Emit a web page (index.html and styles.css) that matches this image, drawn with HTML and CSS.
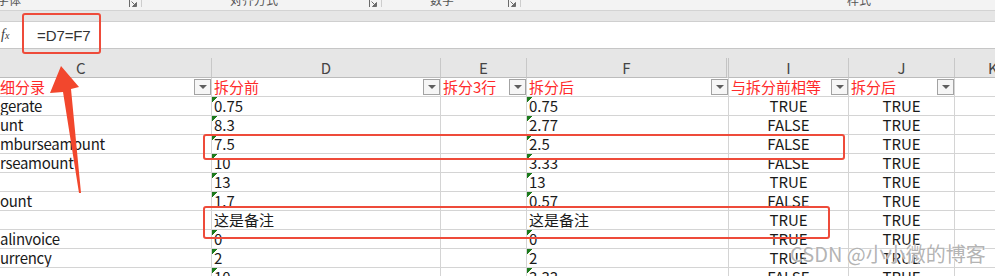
FILE: index.html
```html
<!DOCTYPE html>
<html lang="zh">
<head>
<meta charset="utf-8">
<title>Excel</title>
<link rel="stylesheet" href="styles.css">
</head>
<body>
<div class="app">
  <div class="ribbon">
    <div class="grp g1"><span class="lbl">字体</span><svg class="launch" viewBox="0 0 8 8"><path d="M0.5 8V0.5H6" fill="none" stroke="#6a6a6a"/><path d="M2.5 2.5L6.5 6.5M7.5 3.5V7.5H3.5Z" fill="#6a6a6a" stroke="#6a6a6a"/></svg></div>
    <div class="grp g2"><span class="lbl">对齐方式</span><svg class="launch" viewBox="0 0 8 8"><path d="M0.5 8V0.5H6" fill="none" stroke="#6a6a6a"/><path d="M2.5 2.5L6.5 6.5M7.5 3.5V7.5H3.5Z" fill="#6a6a6a" stroke="#6a6a6a"/></svg></div>
    <div class="grp g3"><span class="lbl">数字</span><svg class="launch" viewBox="0 0 8 8"><path d="M0.5 8V0.5H6" fill="none" stroke="#6a6a6a"/><path d="M2.5 2.5L6.5 6.5M7.5 3.5V7.5H3.5Z" fill="#6a6a6a" stroke="#6a6a6a"/></svg></div>
    <div class="grp g4"><span class="lbl">样式</span></div>
  </div>
  <div class="band"></div>
  <div class="fbar"><span class="fx">f<span class="fxx">x</span></span><span class="formula">=D7=F7</span></div>
  <div class="gap"></div>

  <div class="sheet">
    <div class="ch chC">C</div><div class="ch">D</div><div class="ch">E</div><div class="ch chF">F</div><div class="ch">I</div><div class="ch">J</div><div class="ch chK">K</div>

    <div class="c hd cc"><span>细分录</span><span class="fb"><i></i></span></div>
    <div class="c hd"><span>拆分前</span><span class="fb"><i></i></span></div>
    <div class="c hd"><span>拆分3行</span><span class="fb"><i></i></span></div>
    <div class="c hd"><span>拆分后</span><span class="fb"><i></i></span></div>
    <div class="c hd"><span>与拆分前相等</span><span class="fb"><i></i></span></div>
    <div class="c hd"><span>拆分后</span><span class="fb"><i></i></span></div>
    <div class="c"></div>

    <div class="c cc">gerate</div><div class="c t">0.75</div><div class="c"></div><div class="c t">0.75</div><div class="c ctr">TRUE</div><div class="c ctr">TRUE</div><div class="c"></div>
    <div class="c cc">unt</div><div class="c t">8.3</div><div class="c"></div><div class="c t">2.77</div><div class="c ctr">FALSE</div><div class="c ctr">TRUE</div><div class="c"></div>
    <div class="c cc">mburseamount</div><div class="c t">7.5</div><div class="c"></div><div class="c t">2.5</div><div class="c ctr">FALSE</div><div class="c ctr">TRUE</div><div class="c"></div>
    <div class="c cc">rseamount</div><div class="c t">10</div><div class="c"></div><div class="c t">3.33</div><div class="c ctr">FALSE</div><div class="c ctr">TRUE</div><div class="c"></div>
    <div class="c cc"></div><div class="c t">13</div><div class="c"></div><div class="c t">13</div><div class="c ctr">TRUE</div><div class="c ctr">TRUE</div><div class="c"></div>
    <div class="c cc">ount</div><div class="c t">1.7</div><div class="c"></div><div class="c t">0.57</div><div class="c ctr">FALSE</div><div class="c ctr">TRUE</div><div class="c"></div>
    <div class="c cc"></div><div class="c">这是备注</div><div class="c"></div><div class="c">这是备注</div><div class="c ctr">TRUE</div><div class="c ctr">TRUE</div><div class="c"></div>
    <div class="c cc">alinvoice</div><div class="c t">0</div><div class="c"></div><div class="c t">0</div><div class="c ctr">TRUE</div><div class="c ctr">TRUE</div><div class="c"></div>
    <div class="c cc">urrency</div><div class="c t">2</div><div class="c"></div><div class="c t">2</div><div class="c ctr">TRUE</div><div class="c ctr">TRUE</div><div class="c"></div>
    <div class="c cc"></div><div class="c t">10</div><div class="c"></div><div class="c t">3.33</div><div class="c ctr">FALSE</div><div class="c ctr">TRUE</div><div class="c"></div>
  </div>

  <svg class="marks" width="995" height="276" viewBox="0 0 995 276">
    <rect x="23" y="14" width="77" height="39" rx="2" fill="none" stroke="#ee4b3a" stroke-width="2"/>
    <rect x="204" y="135" width="640" height="24" rx="2" fill="none" stroke="#ee4b3a" stroke-width="2"/>
    <rect x="204" y="207" width="625" height="31" rx="2" fill="none" stroke="#ee4b3a" stroke-width="2"/>
    <polygon points="61,66 79,87 71,89 81,193 79,193 63,92 50,93" fill="#f2472d"/>
  </svg>
  <div class="wm">CSDN @小小微的博客</div>
</div>
</body>
</html>
```

FILE: styles.css
```css
* { box-sizing: border-box; }
html, body { margin: 0; padding: 0; background: #fff; }
body { width: 995px; height: 276px; overflow: hidden; }

.app {
  position: relative;
  width: 995px;
  height: 276px;
  overflow: hidden;
  font-family: "Noto Sans CJK SC", "Noto Sans", sans-serif;
}

/* ribbon group labels (cut off at top) */
.ribbon {
  display: flex;
  height: 11px;
  background: #f3f3f3;
  border-bottom: 1px solid #d3d3d3;
  overflow: hidden;
}
.grp {
  display: flex;
  align-items: flex-start;
  height: 7px;
  border-right: 1px solid #cdcdcd;
}
.g1 { width: 142px; }
.g2 { width: 240px; }
.g3 { width: 139px; }
.g4 { flex: 1; border-right: 0; }
.lbl {
  font-size: 12px;
  line-height: 12px;
  margin-top: -6px;
  color: #555;
  white-space: nowrap;
}
.g1 .lbl { margin-left: -3px; }
.g2 .lbl { margin-left: 88px; }
.g3 .lbl { margin-left: 48px; }
.g4 .lbl { margin-left: 326px; }
.launch {
  width: 8px;
  height: 8px;
  margin-left: auto;
  margin-right: 4px;
  margin-top: -1px;
}

.band {
  height: 11px;
  background: #e6e6e6;
  border-bottom: 1px solid #cfcfcf;
}

.fbar {
  height: 27px;
  background: #fff;
  border-bottom: 1px solid #c6c6c6;
  display: flex;
  align-items: center;
}
.fx {
  width: 37px;
  padding-left: 1px;
  font-family: "Liberation Serif", serif;
  font-style: italic;
  font-size: 14px;
  color: #3a3a3a;
}
.fxx { font-size: 10px; }
.formula {
  font-family: "Liberation Sans", Arial, sans-serif;
  font-size: 15px;
  color: #333;
  letter-spacing: -0.1px;
}

.gap {
  height: 9px;
  background: #e6e6e6;
}

/* grid */
.sheet {
  display: grid;
  grid-template-columns: 212px 229px 86px 202px 120px 106px 1fr;
  grid-template-rows: 20px;
  grid-auto-rows: 19px;
}
.ch {
  background: #e6e6e6;
  border-right: 1px solid #c8c8c8;
  border-bottom: 1px solid #bcbcbc;
  text-align: center;
  font-size: 15px;
  line-height: 19px;
  color: #444;
}
.chC { text-align: left; padding-left: 76px; }
.chF { border-right: 3px double #c4c4c4; }
.chK { text-align: left; padding-left: 33px; border-right: 0; }

.c {
  border-right: 1px solid #d4d4d4;
  border-bottom: 1px solid #d4d4d4;
  font-size: 15px;
  line-height: 18px;
  padding: 0 2px;
  white-space: nowrap;
  color: #1a1a1a;
}
.cc { padding-left: 0; overflow: hidden; letter-spacing: -0.3px; }
.ctr { text-align: center; }
.t {
  background: linear-gradient(135deg, #1c7a1c 0 3.8px, transparent 3.8px) no-repeat 0 0 / 7px 7px;
}

.hd {
  display: flex;
  justify-content: space-between;
  align-items: flex-start;
  padding-right: 0;
  color: #ff2a2a;
  letter-spacing: 0;
}
.fb {
  width: 17px;
  height: 16px;
  margin-top: 1px;
  border: 1px solid #a3a3a3;
  background: #f6f6f6;
  display: flex;
  align-items: center;
  justify-content: center;
}
.fb i {
  width: 0;
  height: 0;
  border-left: 4px solid transparent;
  border-right: 4px solid transparent;
  border-top: 4px solid #5e5e5e;
}

/* annotations */
.marks {
  position: absolute;
  left: 0;
  top: 0;
  pointer-events: none;
}
.wm {
  position: absolute;
  left: 790px;
  top: 244px;
  font-size: 20px;
  line-height: 20px;
  color: rgba(160, 160, 160, 0.8);
  text-shadow: 0 0 1px #fff, 0 0 2px #fff;
  white-space: nowrap;
}
```
